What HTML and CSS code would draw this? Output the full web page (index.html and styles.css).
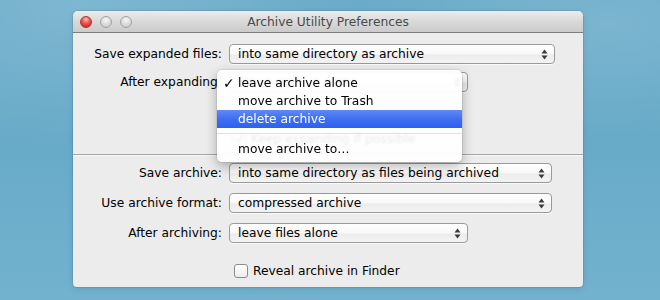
FILE: index.html
```html
<!DOCTYPE html>
<html lang="en">

<head>
    <meta charset="utf-8">
    <title>Archive Utility Preferences</title>
    <link rel="stylesheet" href="styles.css">
</head>

<body>

    <div class="desk">
        <div class="window">
            <div class="titlebar">
                <div class="lights">
                    <span class="light close"></span>
                    <span class="light"></span>
                    <span class="light"></span>
                </div>
                <div class="title">Archive Utility Preferences</div>
            </div>

            <section class="pane expand">
                <div class="row">
                    <span class="lbl">Save expanded files:</span>
                    <div class="popup wide">
                        <span>into same directory as archive</span>
                        <svg class="arrows" width="7" height="11" viewBox="0 0 7 11"><path d="M0.5 4.5 L3.5 0.5 L6.5 4.5Z M0.5 6.5 L3.5 10.5 L6.5 6.5Z"/></svg>
                    </div>
                </div>
                <div class="row">
                    <span class="lbl">After expanding:</span>
                    <div class="popup short">
                        <span>leave archive alone</span>
                        <svg class="arrows" width="7" height="11" viewBox="0 0 7 11"><path d="M0.5 4.5 L3.5 0.5 L6.5 4.5Z M0.5 6.5 L3.5 10.5 L6.5 6.5Z"/></svg>
                    </div>
                </div>
                <div class="check ghost">
                    <span class="box on">
                        <svg width="12" height="12" viewBox="0 0 12 12"><path d="M2 6 L5 9 L10 2" fill="none" stroke="#3d6fd8" stroke-width="2"/></svg>
                    </span>
                    <span>Keep expanding if possible</span>
                </div>
            </section>

            <div class="divider"></div>

            <section class="pane archive">
                <div class="row">
                    <span class="lbl">Save archive:</span>
                    <div class="popup mid">
                        <span>into same directory as files being archived</span>
                        <svg class="arrows" width="7" height="11" viewBox="0 0 7 11"><path d="M0.5 4.5 L3.5 0.5 L6.5 4.5Z M0.5 6.5 L3.5 10.5 L6.5 6.5Z"/></svg>
                    </div>
                </div>
                <div class="row">
                    <span class="lbl">Use archive format:</span>
                    <div class="popup mid">
                        <span>compressed archive</span>
                        <svg class="arrows" width="7" height="11" viewBox="0 0 7 11"><path d="M0.5 4.5 L3.5 0.5 L6.5 4.5Z M0.5 6.5 L3.5 10.5 L6.5 6.5Z"/></svg>
                    </div>
                </div>
                <div class="row">
                    <span class="lbl">After archiving:</span>
                    <div class="popup short">
                        <span>leave files alone</span>
                        <svg class="arrows" width="7" height="11" viewBox="0 0 7 11"><path d="M0.5 4.5 L3.5 0.5 L6.5 4.5Z M0.5 6.5 L3.5 10.5 L6.5 6.5Z"/></svg>
                    </div>
                </div>
                <div class="check reveal">
                    <span class="box"></span>
                    <span>Reveal archive in Finder</span>
                </div>
            </section>

            <ul class="menu">
                <li class="item"><span class="tick">✓</span>leave archive alone</li>
                <li class="item"><span class="tick"></span>move archive to Trash</li>
                <li class="item hilite"><span class="tick"></span>delete archive</li>
                <li class="sep"></li>
                <li class="item"><span class="tick"></span>move archive to…</li>
            </ul>
        </div>
    </div>

</body>
</html>
```

FILE: styles.css
```css
* {
    box-sizing: border-box;
}

html,
body {
    margin: 0;
    height: 300px;
    overflow: hidden;
}

body {
    font-family: "DejaVu Sans", "Lucida Grande", sans-serif;
    font-size: 12.25px;
    color: #000;
    background: radial-gradient(ellipse at 12% 2%, rgba(255, 255, 255, 0.14), rgba(255, 255, 255, 0) 35%),
        radial-gradient(ellipse at 92% 8%, rgba(255, 255, 255, 0.12), rgba(255, 255, 255, 0) 30%),
        linear-gradient(to bottom, #69abc9, #67aac8 45%, #72b2cf);
}

.desk {
    padding: 11px 0 0 73px;
}

.window {
    position: relative;
    width: 510px;
    height: 276px;
    background: #ececec;
    border-radius: 5px 5px 4px 4px;
    box-shadow: 0 0 0 1px rgba(0, 0, 0, 0.08), 0 2px 6px rgba(0, 0, 0, 0.1);
}

/* title bar */

.titlebar {
    display: grid;
    grid-template-columns: 1fr auto 1fr;
    align-items: center;
    height: 22px;
    padding-bottom: 1px;
    border-bottom: 1px solid #7d7d7d;
    border-radius: 5px 5px 0 0;
    background: linear-gradient(to bottom, #ececec, #d9d9d9 50%, #cbcbcb);
}

.lights {
    display: flex;
    gap: 8px;
    padding-left: 7px;
    padding-top: 2px;
}

.light {
    width: 12px;
    height: 12px;
    border-radius: 50%;
    border: 1px solid #a3a3a3;
    background: radial-gradient(circle at 50% 30%, #f7f7f7, #dadada 55%, #c4c4c4);
}

.light.close {
    border-color: #b0342f;
    background: radial-gradient(circle at 50% 25%, #ffc9c4 0, #f4615a 35%, #d8322b 75%, #bd2620);
}

.title {
    color: #4a4a4a;
    padding-top: 1px;
}

/* rows */

.pane {
    display: flex;
    flex-direction: column;
}

.expand {
    padding-top: 11px;
}

.expand .row + .row {
    margin-top: 8px;
}

.archive {
    margin-top: 7px;
}

.archive .row + .row {
    margin-top: 10px;
}

.row {
    display: flex;
    align-items: center;
    height: 20px;
}

.lbl {
    width: 149px;
    text-align: right;
    margin-right: 7px;
}

.popup {
    display: flex;
    justify-content: space-between;
    align-items: center;
    height: 20px;
    padding: 0 6px 0 8px;
    border: 1px solid #9a9a9a;
    border-radius: 4px;
    background: linear-gradient(to bottom, #ffffff, #f8f8f8 50%, #ececec 55%, #f3f3f3);
    box-shadow: 0 1px 0 rgba(255, 255, 255, 0.7);
}

.popup.wide {
    width: 326px;
}

.popup.mid {
    width: 323px;
}

.popup.short {
    width: 239px;
}

.arrows {
    fill: #3a3a3a;
}

/* checkboxes */

.check {
    display: flex;
    align-items: center;
    gap: 5px;
    height: 14px;
}

.box {
    display: flex;
    align-items: center;
    justify-content: center;
    width: 14px;
    height: 14px;
    border: 1px solid #8c8c8c;
    border-radius: 3px;
    background: linear-gradient(to bottom, #ffffff, #ececec);
}

.ghost {
    margin: 40px 0 0 159px;
}

.reveal {
    margin: 21px 0 0 161px;
}

.divider {
    margin-top: 8px;
    height: 2px;
    border-top: 1px solid #a6a6a6;
    border-bottom: 1px solid #f7f7f7;
}

/* open menu */

.menu {
    position: absolute;
    left: 144px;
    top: 59px;
    width: 245px;
    margin: 0;
    padding: 4px 0;
    list-style: none;
    border-radius: 5px;
    background: rgba(255, 255, 255, 0.92);
    backdrop-filter: blur(1px);
    box-shadow: 0 0 0 1px rgba(0, 0, 0, 0.06), 0 4px 12px rgba(0, 0, 0, 0.3);
}

.item {
    display: flex;
    align-items: center;
    height: 18px;
    padding-left: 6px;
    color: #000;
}

.tick {
    width: 15px;
    font-size: 14px;
    font-weight: bold;
    line-height: 1;
}

.hilite {
    color: #fff;
    background: linear-gradient(to bottom, #6189f5, #3f6ff0 50%, #2c60ee);
}

.sep {
    height: 1px;
    margin: 5px 0 6px;
    background: #e2e2e2;
}
```
